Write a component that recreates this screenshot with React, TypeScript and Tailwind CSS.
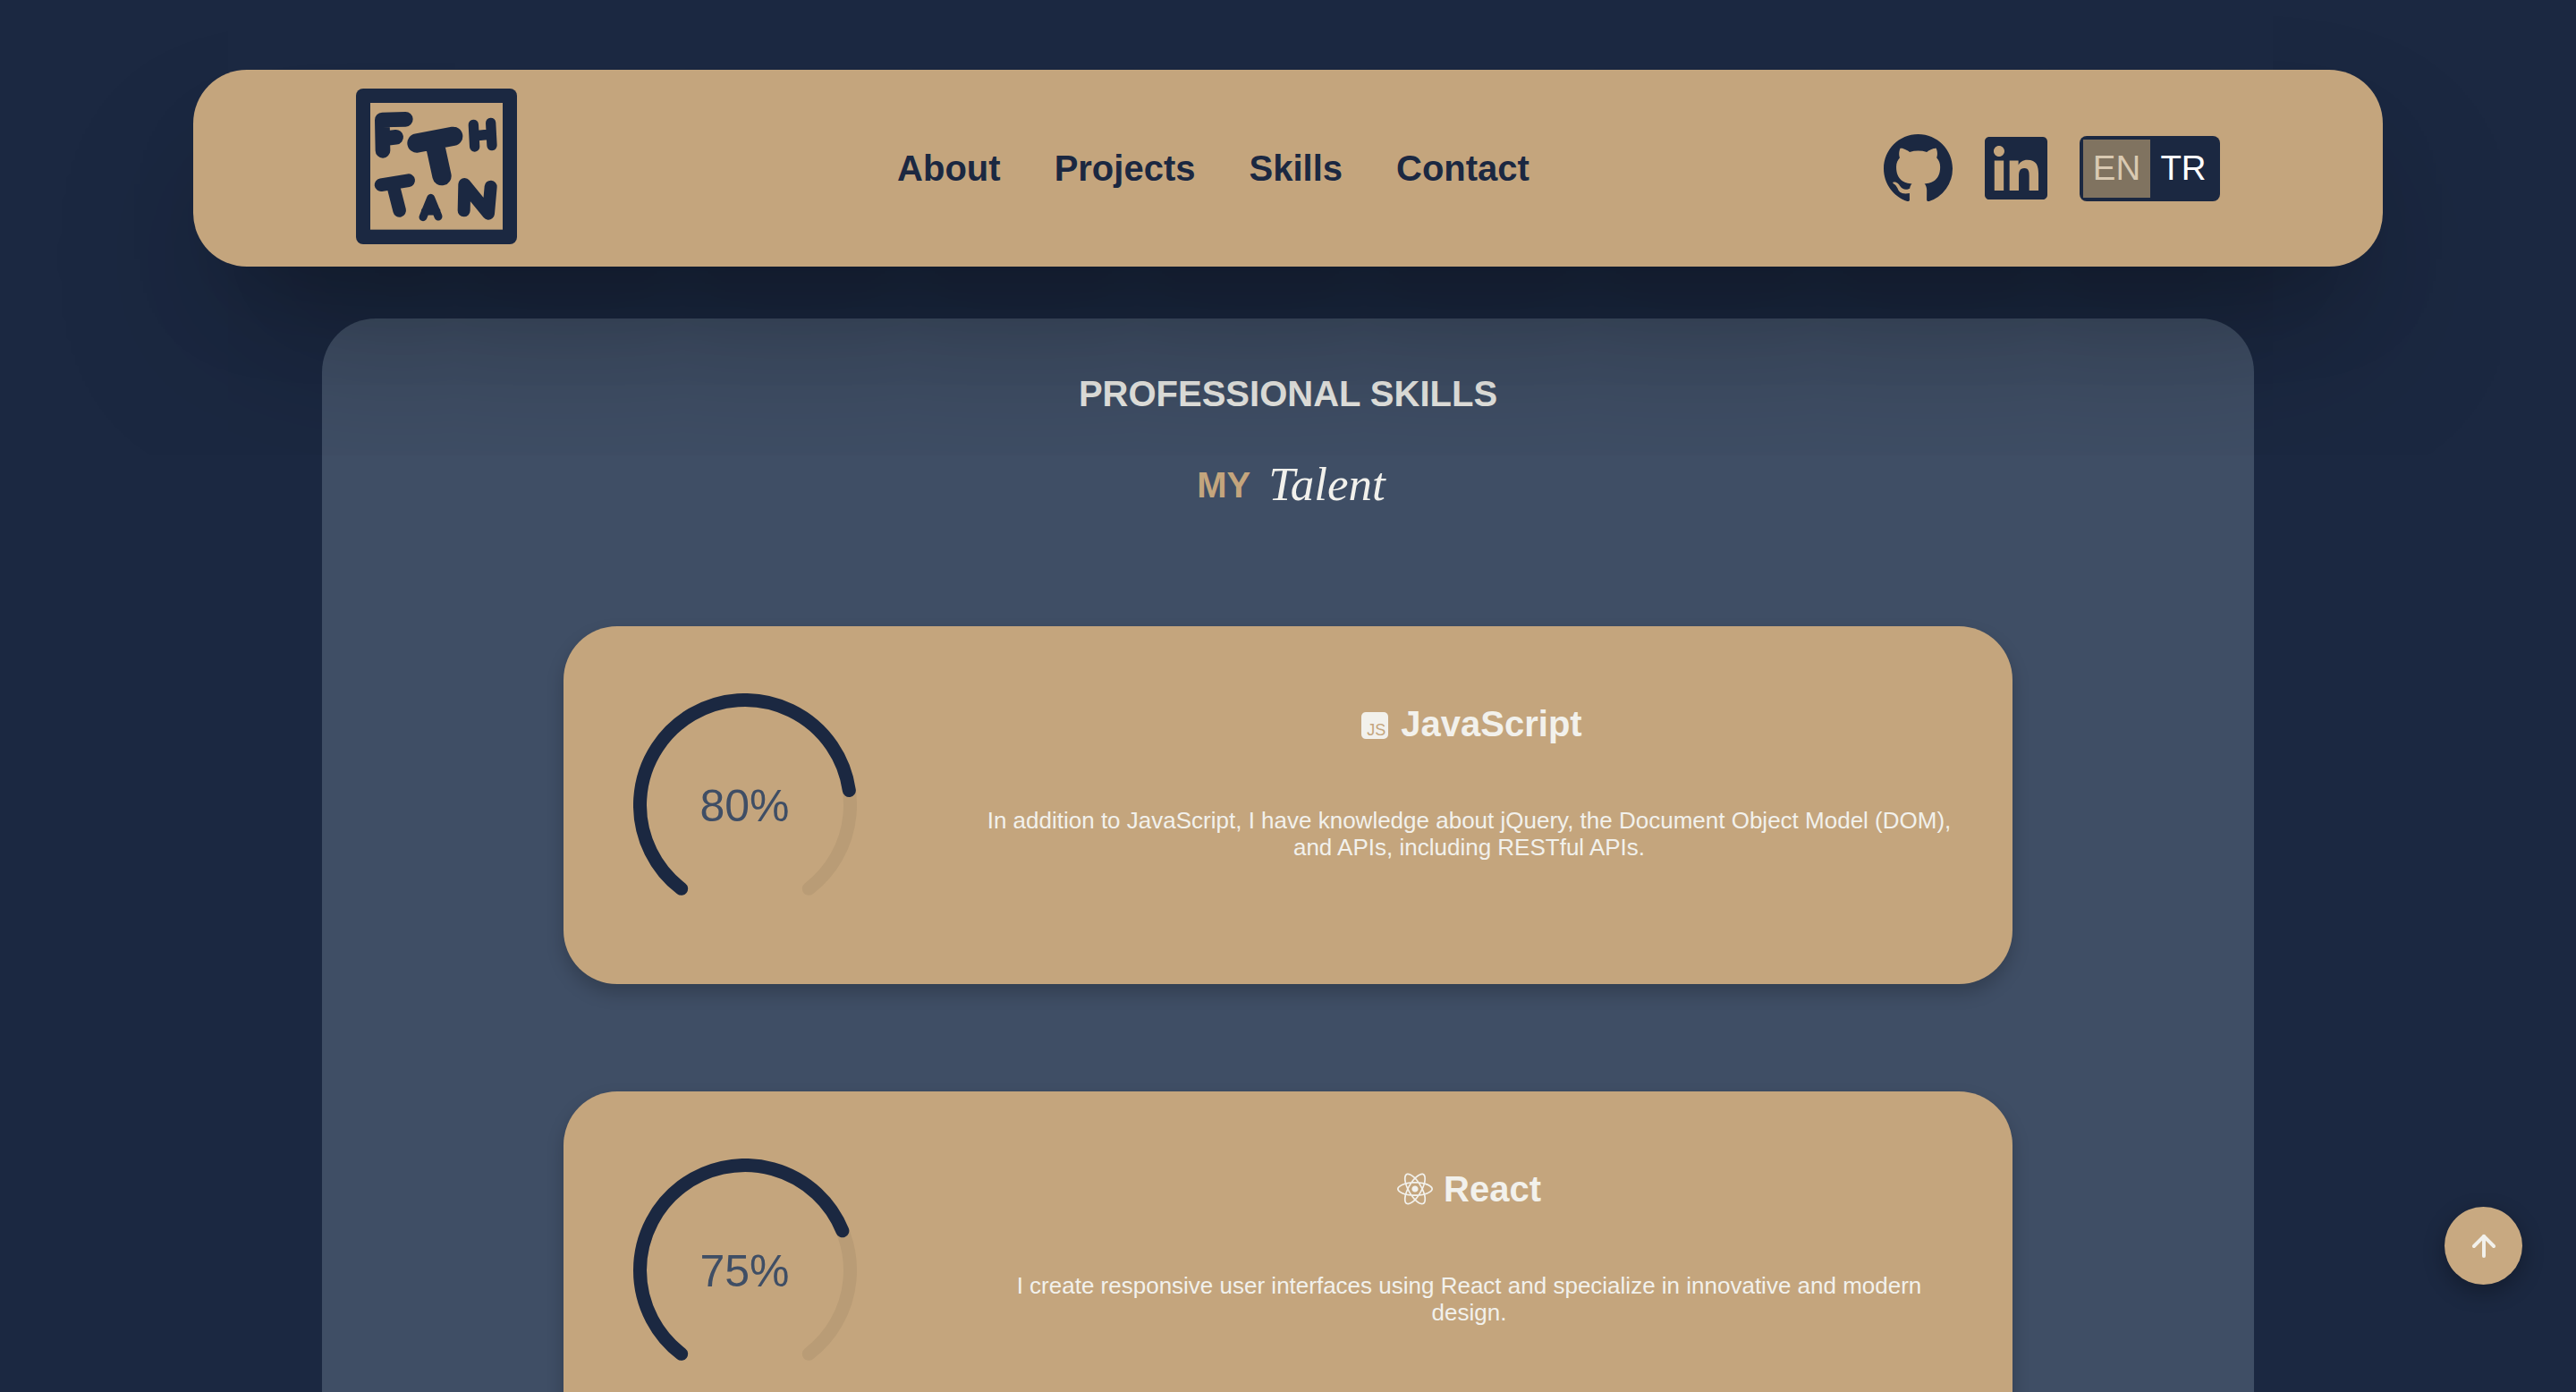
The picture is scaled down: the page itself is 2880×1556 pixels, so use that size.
import { ArrowUp } from 'lucide-react';
import { FaLinkedin, FaReact } from 'react-icons/fa';
import type { ReactNode } from 'react';

const GITHUB_PATH =
  'M8 0C3.58 0 0 3.58 0 8c0 3.54 2.29 6.53 5.47 7.59.4.07.55-.17.55-.38 0-.19-.01-.82-.01-1.49-2.01.37-2.53-.49-2.69-.94-.09-.23-.48-.94-.82-1.13-.28-.15-.68-.52-.01-.53.63-.01 1.08.58 1.23.82.72 1.21 1.87.87 2.33.66.07-.52.28-.87.51-1.07-1.78-.2-3.64-.89-3.64-3.95 0-.87.31-1.59.82-2.15-.08-.2-.36-1.02.08-2.12 0 0 .67-.21 2.2.82.64-.18 1.32-.27 2-.27.68 0 1.36.09 2 .27 1.53-1.04 2.2-.82 2.2-.82.44 1.1.16 1.92.08 2.12.51.56.82 1.27.82 2.15 0 3.07-1.87 3.75-3.65 3.95.29.25.54.73.54 1.48 0 1.07-.01 1.93-.01 2.2 0 .21.15.46.55.38A8.013 8.013 0 0016 8c0-4.42-3.58-8-8-8z';

function Logo() {
  return (
    <svg width="180" height="174" viewBox="594 117 540 522" className="shrink-0 mb-[4px]">
      <rect x="594" y="117" width="540" height="522" rx="24" fill="#1b2841" />
      <rect x="642" y="165" width="444" height="425" fill="#c4a57d" />
      <g fill="none" stroke="#1b2841" strokeLinecap="round" strokeLinejoin="round">
        <g strokeWidth="50">
          <path d="M682 222 L760 220 M682 222 L684 325 M685 285 L728 280" />
        </g>
        <g strokeWidth="64">
          <path d="M798 300 L920 277 M858 300 L882 410" />
        </g>
        <g strokeWidth="34">
          <path d="M988 238 L992 312 M1046 232 L1050 308 M990 276 L1046 270" />
        </g>
        <g strokeWidth="44">
          <path d="M678 440 L770 425 M718 440 L740 526" />
        </g>
        <g strokeWidth="27">
          <path d="M819 548 L845 484 L870 546 M826 528 L864 528" />
        </g>
        <g strokeWidth="42">
          <path d="M956 526 L958 438 L1038 536 L1046 446" />
        </g>
      </g>
    </svg>
  );
}

function Gauge({ value }: { value: number }) {
  const r = 117.5;
  const start = 37.4;
  const point = (deg: number) => {
    const a = (deg * Math.PI) / 180;
    return `${125 - r * Math.sin(a)} ${125 + r * Math.cos(a)}`;
  };
  const arc = (from: number, to: number) =>
    `M${point(from)} A${r} ${r} 0 ${to - from > 180 ? 1 : 0} 1 ${point(to)}`;

  return (
    <div className="relative w-[250px] h-[250px]">
      <svg width="250" height="250" viewBox="0 0 250 250" fill="none" strokeWidth="15" strokeLinecap="round">
        <path d={arc(start, 322.6)} stroke="#b99c76" />
        <path d={arc(start, start + 2.807 * value)} stroke="#1b2841" />
      </svg>
      <div className="absolute inset-0 flex items-center justify-center pt-[3px] text-[50px] text-[#3f4e65]">{value}%</div>
    </div>
  );
}

function JsIcon() {
  return (
    <span className="flex items-end justify-end w-[30px] h-[30px] mt-[4px] ml-[6px] mr-[2px] pr-[3px] rounded-[5px] bg-[#f2f1ec] text-[18px] leading-[19px] font-normal text-[#c4a57d]">
      JS
    </span>
  );
}

function SkillCard({ value, icon, title, text }: { value: number; icon: ReactNode; title: string; text: string }) {
  return (
    <div className="flex items-center w-[1620px] h-[400px] shrink-0 rounded-[60px] bg-[#c4a57d] shadow-[0_10px_20px_rgba(0,0,0,0.2)]">
      <div className="flex justify-center w-1/4">
        <Gauge value={value} />
      </div>
      <div className="flex flex-col items-center w-3/4 px-[60px] pb-[54px] text-[#f2f1ec]">
        <h3 className="flex items-center gap-[12px] h-[48px] text-[40px] font-bold">
          {icon}
          {title}
        </h3>
        <p className="mt-[69px] text-[26px] leading-[30px] text-center">{text}</p>
      </div>
    </div>
  );
}

export default function App() {
  return (
    <div className="relative h-[1556px] overflow-hidden bg-[#1b2841] pt-[78px] font-['Liberation_Sans',sans-serif]">
      <header className="relative z-10 flex items-center justify-between w-[2448px] h-[220px] mx-auto px-[182px] rounded-[60px] bg-[#c4a57d] shadow-[0_100px_200px_-40px_rgba(0,0,0,0.3),0_60px_120px_-60px_rgba(0,0,0,0.35)]">
        <Logo />
        <nav className="flex gap-[60px] ml-[29px] text-[40px] font-bold text-[#1b2841]">
          <a>About</a>
          <a>Projects</a>
          <a>Skills</a>
          <a>Contact</a>
        </nav>
        <div className="flex items-center gap-[36px]">
          <svg width="77" height="77" viewBox="0 0 16 16" fill="#1b2841">
            <path d={GITHUB_PATH} />
          </svg>
          <FaLinkedin color="#1b2841" className="w-[70px] h-[80px]" />
          <div className="flex w-[157px] h-[73px] p-[4px] rounded-[8px] bg-[#1b2841] text-[38.4px] leading-none">
            <span className="flex items-center justify-center w-[75px] bg-[#807360] text-[#d9c9b2]">EN</span>
            <span className="flex items-center justify-center flex-1 text-white">TR</span>
          </div>
        </div>
      </header>

      <main className="flex flex-col items-center w-[2160px] h-[1300px] mx-auto mt-[58px] pt-[61px] rounded-[60px] bg-[#3f4e65]">
        <h2 className="h-[46px] text-[40px] leading-[46px] font-bold text-[#e6e6e2]">PROFESSIONAL SKILLS</h2>
        <div className="flex items-center gap-[20px] h-[60px] mt-[49px] ml-[7px]">
          <span className="text-[40px] font-bold text-[#c4a57d]">MY</span>
          <span className="font-['Liberation_Serif',serif] italic text-[53px] text-[#f2f1ec]">Talent</span>
        </div>
        <div className="flex flex-col gap-[120px] mt-[128px]">
          <SkillCard
            value={80}
            icon={<JsIcon />}
            title="JavaScript"
            text="In addition to JavaScript, I have knowledge about jQuery, the Document Object Model (DOM), and APIs, including RESTful APIs."
          />
          <SkillCard
            value={75}
            icon={<FaReact size={40} />}
            title="React"
            text="I create responsive user interfaces using React and specialize in innovative and modern design."
          />
        </div>
      </main>

      <button className="fixed right-[60px] bottom-[120px] z-20 flex items-center justify-center w-[87px] h-[87px] rounded-full bg-[#c8a981] text-[#f2f1ec] shadow-[0_8px_24px_rgba(0,0,0,0.3)]">
        <ArrowUp size={38} strokeWidth={2.5} />
      </button>
    </div>
  );
}
